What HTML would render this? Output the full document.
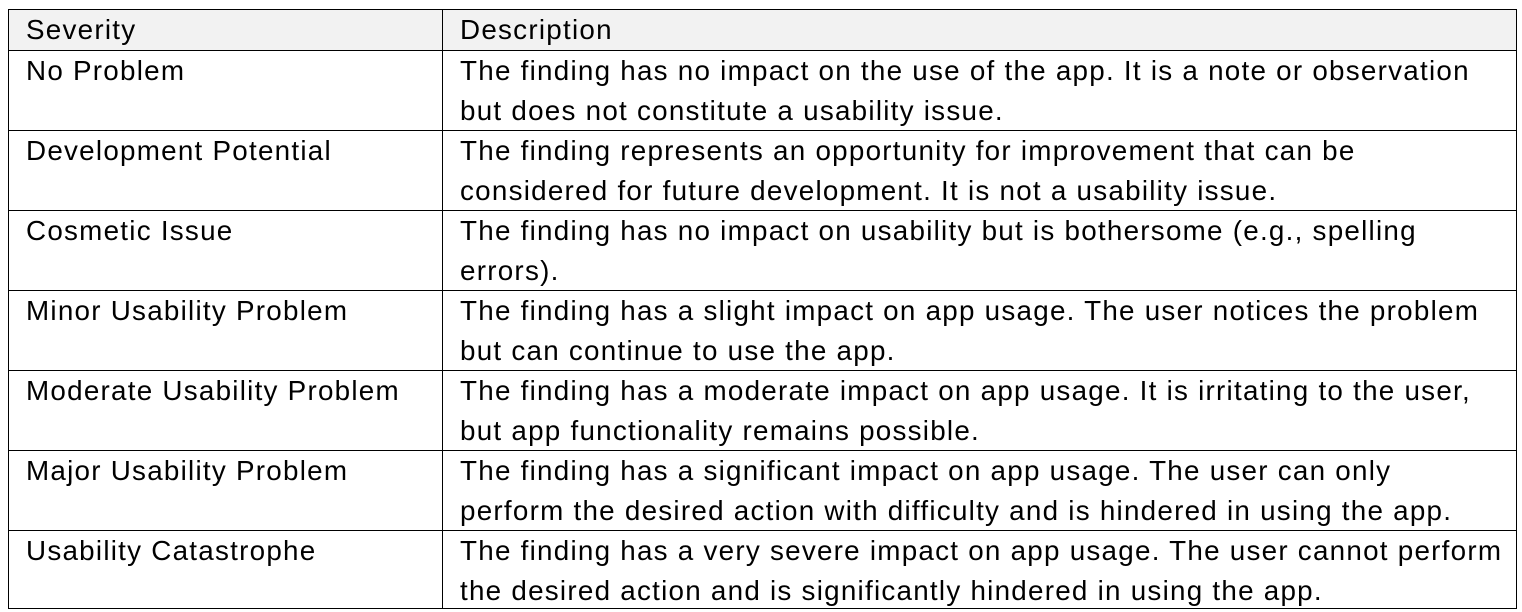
<!DOCTYPE html>
<html><head><style>
html,body{margin:0;padding:0;background:#fff;width:1522px;height:612px;overflow:hidden}
.t{position:absolute;left:8px;top:9px;width:1509px;height:600px;border:1px solid #000;box-sizing:border-box}
.h{position:absolute;left:0;top:0;width:100%;height:40px;background:#f2f2f2}
.hl{position:absolute;left:0;width:100%;height:1px;background:#000}
.vl{position:absolute;left:433px;top:0;width:1px;height:100%;background:#000}
.c{position:absolute;font-family:"Liberation Sans",sans-serif;font-size:27.8px;letter-spacing:1.25px;line-height:39.5px;color:#000;white-space:nowrap}
</style></head><body>
<div class="t">
<div class="h"></div>
<div class="hl" style="top:40px"></div>
<div class="hl" style="top:120px"></div>
<div class="hl" style="top:200px"></div>
<div class="hl" style="top:280px"></div>
<div class="hl" style="top:360px"></div>
<div class="hl" style="top:440px"></div>
<div class="hl" style="top:520px"></div>
<div class="vl"></div>
<div class="c" style="left:17px;top:0px">Severity</div>
<div class="c" style="left:451px;top:0px">Description</div>
<div class="c" style="left:17px;top:41px">No Problem</div>
<div class="c" style="left:451px;top:41px">The finding has no impact on the use of the app. It is a note or observation<br>but does not constitute a usability issue.</div>
<div class="c" style="left:17px;top:121px">Development Potential</div>
<div class="c" style="left:451px;top:121px">The finding represents an opportunity for improvement that can be<br>considered for future development. It is not a usability issue.</div>
<div class="c" style="left:17px;top:201px">Cosmetic Issue</div>
<div class="c" style="left:451px;top:201px">The finding has no impact on usability but is bothersome (e.g., spelling<br>errors).</div>
<div class="c" style="left:17px;top:281px">Minor Usability Problem</div>
<div class="c" style="left:451px;top:281px">The finding has a slight impact on app usage. The user notices the problem<br>but can continue to use the app.</div>
<div class="c" style="left:17px;top:361px">Moderate Usability Problem</div>
<div class="c" style="left:451px;top:361px">The finding has a moderate impact on app usage. It is irritating to the user,<br>but app functionality remains possible.</div>
<div class="c" style="left:17px;top:441px">Major Usability Problem</div>
<div class="c" style="left:451px;top:441px">The finding has a significant impact on app usage. The user can only<br>perform the desired action with difficulty and is hindered in using the app.</div>
<div class="c" style="left:17px;top:521px">Usability Catastrophe</div>
<div class="c" style="left:451px;top:521px">The finding has a very severe impact on app usage. The user cannot perform<br>the desired action and is significantly hindered in using the app.</div>
</div>
</body></html>
